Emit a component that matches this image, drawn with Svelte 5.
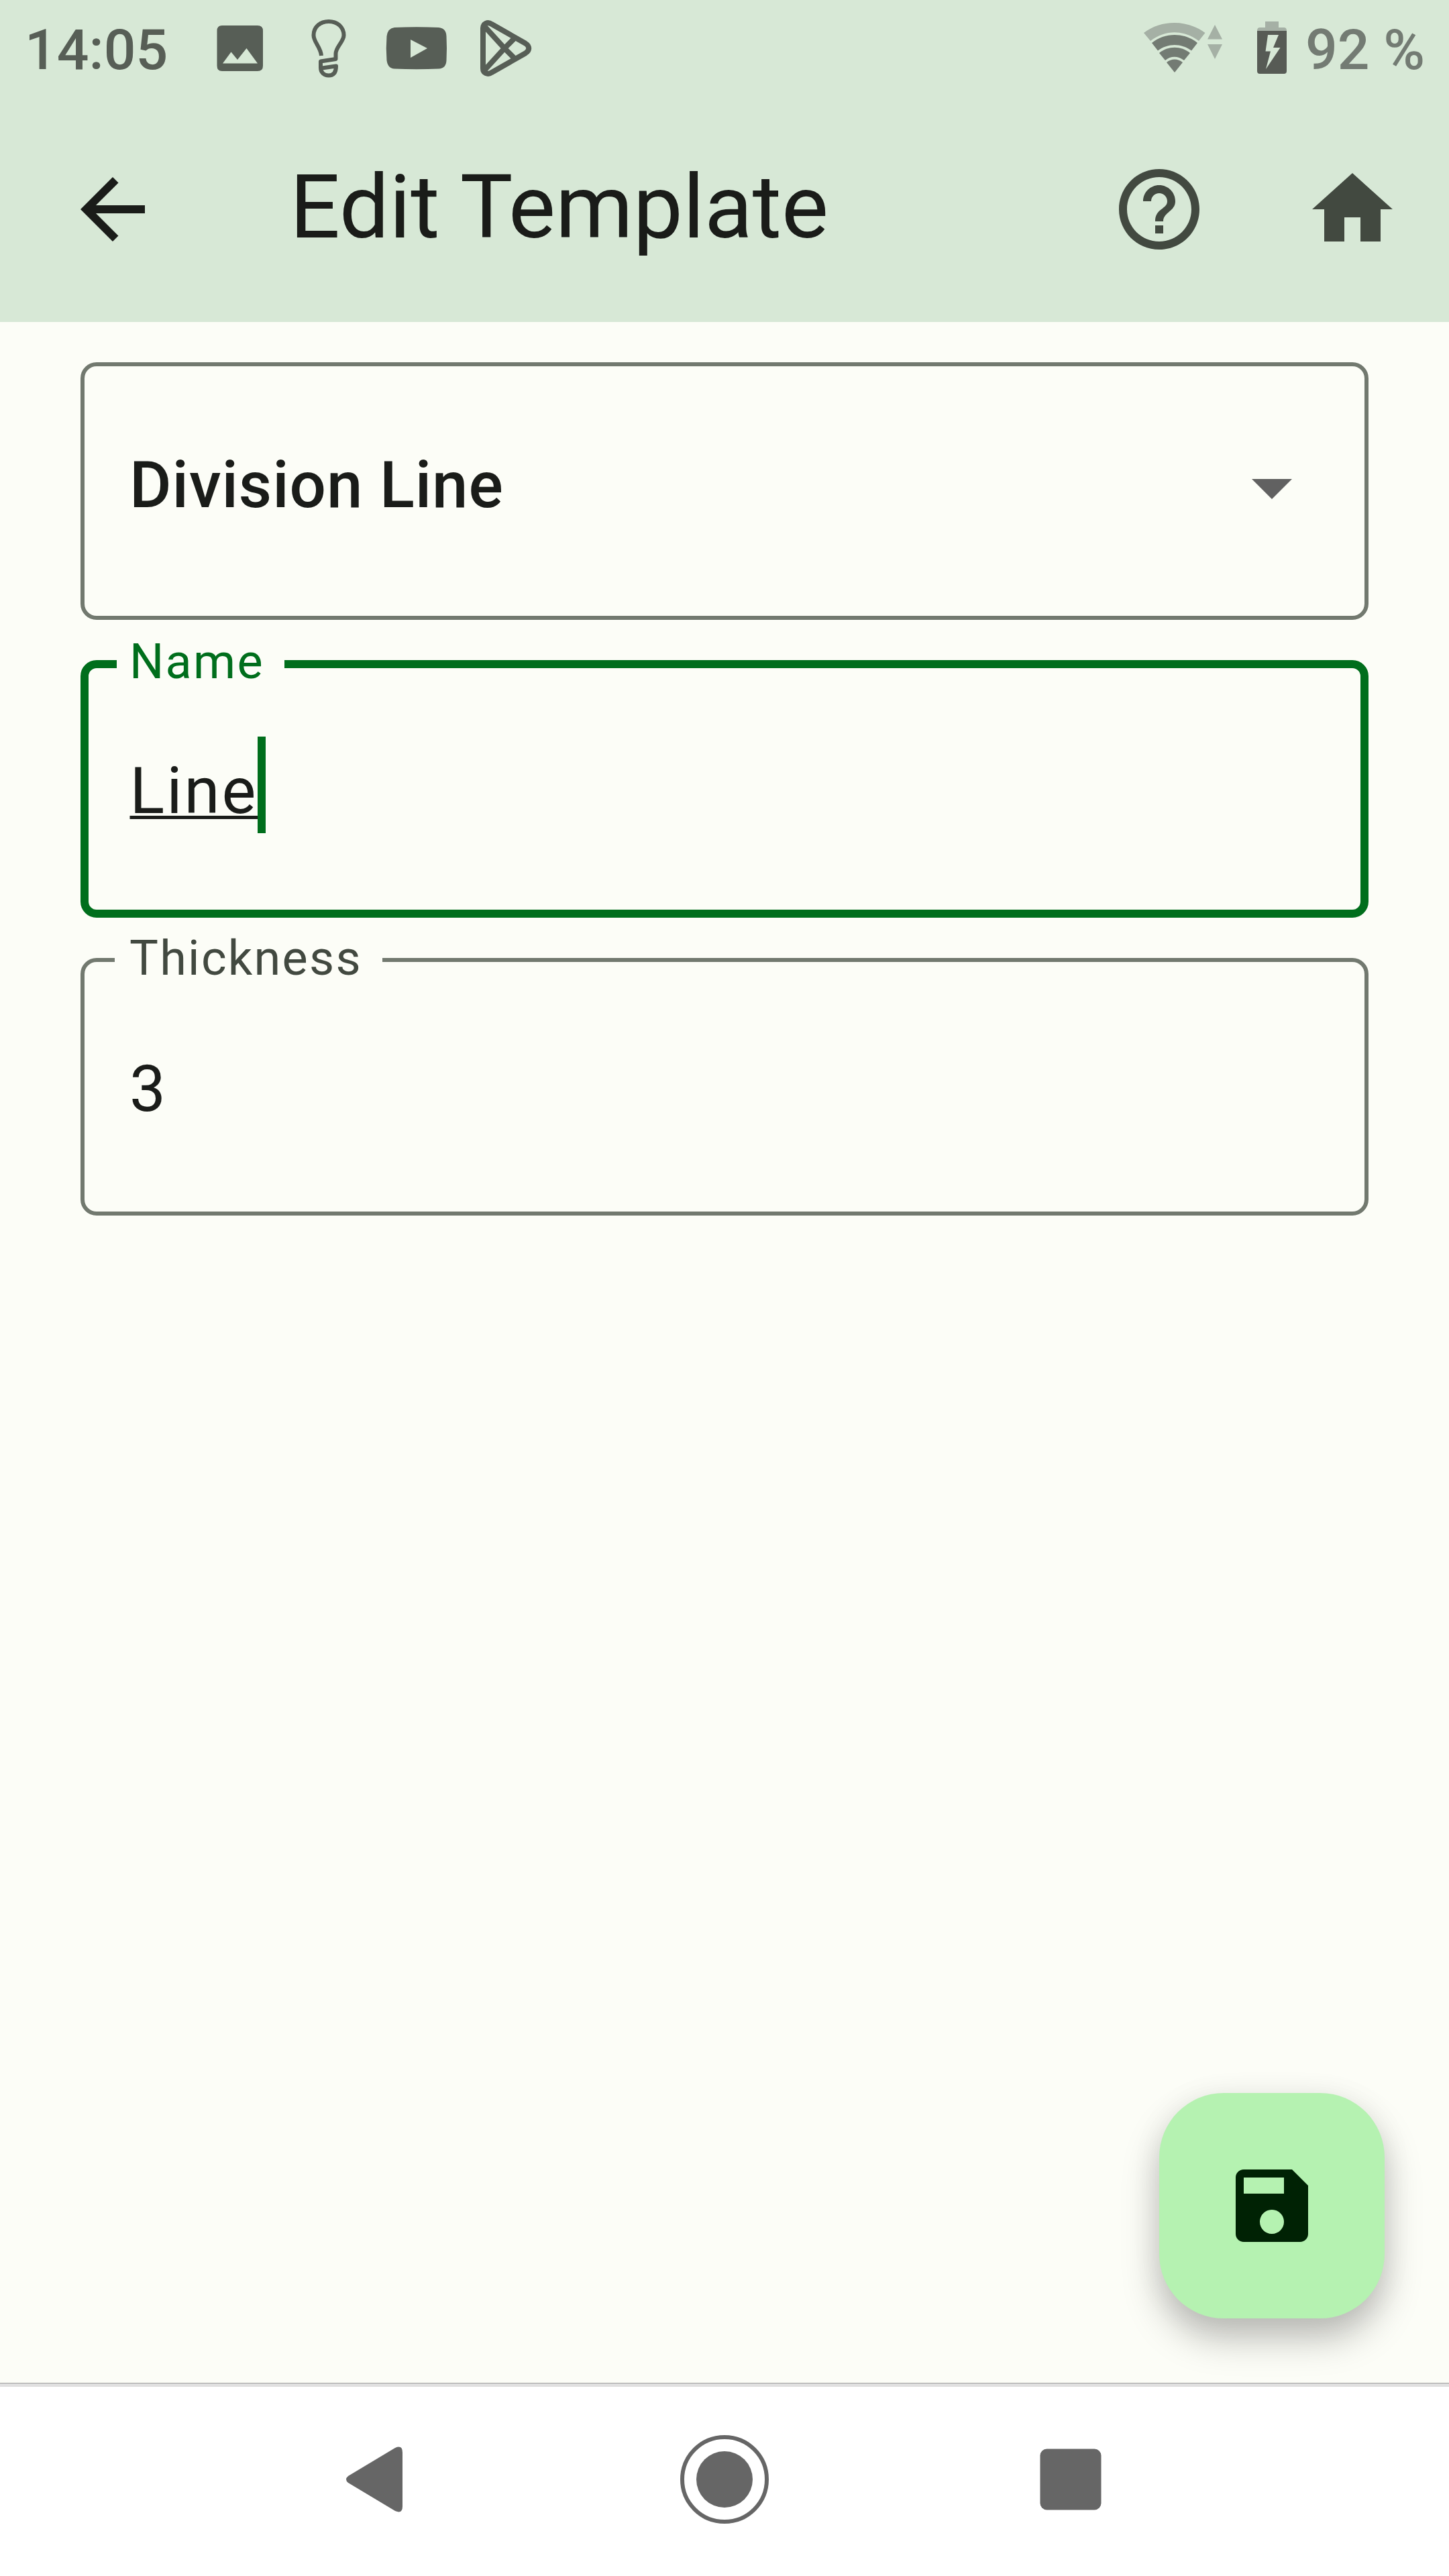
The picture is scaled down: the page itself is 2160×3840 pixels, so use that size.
<script>
  const title = 'Edit Template';
  const fields = { type: 'Division Line', name: 'Line', thickness: '3' };
</script>

<main class="screen">
  <header>
    <div class="status">
      <span class="clock">14:05</span>
      <svg class="notifications" viewBox="300 0 510 144">
        <path fill-rule="evenodd" d="M331 38H384Q392 38 392 46V98Q392 106 384 106H331Q323.500 106 323.500 98V46Q323.500 38 331 38ZM332 94.500H384L367.500 72L354 89L344.500 77.500Z" />
        <g class="outline thin">
          <path d="M479 83C478 70 467.500 63 467.500 52.500C467.500 40 477.500 32 490 32S512.500 40 512.500 52.500C512.500 62 500.500 70 500.500 80V88L478 91.500V101C478 108 483 112.500 490 112.500S501 108 501 98.500L480 101.500" />
        </g>
        <path fill-rule="evenodd" d="M588 41Q621 39.500 654 41Q665 42 665.500 54Q666.500 72 665.500 90Q665 102 654 102.500Q621 104 588 102.500Q578 102 576.500 90Q575 72 576.500 54Q578 42 588 41ZM612 59V86L637 72Z" />
        <g class="outline">
          <path d="M720 42C720 35 727 32 733 36L783 64.500C790 69 790 75 783 79.500L733 108C727 112 720 109 720 102ZM721 38L752 72L768 88M721 106L752 72L768 56" />
        </g>
      </svg>
      <svg class="system" viewBox="1690 0 240 144">
        <path class="faint" d="M1705 49C1731 29 1770 29 1796.500 49L1787 61C1765 44 1737 44 1715 61Z" />
        <path class="mid" d="M1717 64C1736 48 1766 48 1785 64L1776 75.500C1761 64 1741 64 1726 75.500ZM1728 79C1741 68 1761 68 1774 79L1765 90C1756 83 1745 83 1737 90ZM1739 93C1746 87 1756 87 1763 93L1751 108Z" />
        <path class="faint" d="M1800 58.500L1811 37L1822 58.500ZM1800 66H1822L1811 88Z" />
        <path class="faint" d="M1886 32H1906V41H1914Q1918 41 1918 46H1874Q1874 41 1878 41H1886Z" />
        <path class="solid" fill-rule="evenodd" d="M1874 46H1918V106Q1918 110 1914 110H1878Q1874 110 1874 106ZM1890 52L1886.500 76.500H1894L1887 103L1908.500 71H1898L1906 52Z" />
      </svg>
      <span class="percent">92 %</span>
    </div>
    <div class="appbar">
      <svg class="icon ink" viewBox="0 0 24 24"><path d="M20 11H7.830l5.590-5.590L12 4l-8 8 8 8 1.410-1.410L7.830 13H20v-2z" /></svg>
      <h1>{title}</h1>
      <svg class="icon" viewBox="0 0 24 24"><path d="M11 18h2v-2h-2v2zm1-16C6.480 2 2 6.480 2 12s4.480 10 10 10 10-4.480 10-10S17.520 2 12 2zm0 18c-4.410 0-8-3.590-8-8s3.590-8 8-8 8 3.590 8 8-3.590 8-8 8zm0-14c-2.210 0-4 1.790-4 4h2c0-1.100.9-2 2-2s2 .9 2 2c0 2-3 1.750-3 5h2c0-2.250 3-2.500 3-5 0-2.210-1.790-4-4-4z" /></svg>
      <svg class="icon" viewBox="0 0 24 24"><path d="M10 20v-6h4v6h5v-8h3L12 3 2 12h3v8z" /></svg>
    </div>
  </header>

  <section class="form">
    <div class="select">
      <span>{fields.type}</span>
      <svg viewBox="0 0 24 24"><path d="M7 10l5 5 5-5z" /></svg>
    </div>
    <fieldset class="focused">
      <legend><span>Name</span></legend>
      <div class="value"><span class="typed">{fields.name}</span><i class="caret"></i></div>
    </fieldset>
    <fieldset>
      <legend><span>Thickness</span></legend>
      <div class="value">{fields.thickness}</div>
    </fieldset>
    <button class="fab" aria-label="Save">
      <svg viewBox="0 0 24 24"><path d="M17 3H5c-1.110 0-2 .9-2 2v14c0 1.100.89 2 2 2h14c1.100 0 2-.9 2-2V7l-4-4zm-5 16c-1.660 0-3-1.340-3-3s1.340-3 3-3 3 1.340 3 3-1.340 3-3 3zm3-10H5V5h10v4z" /></svg>
    </button>
  </section>

  <nav>
    <svg viewBox="0 0 144 144"><path d="M27 67L97 25Q108 20 108 32V112Q108 124 97 119L27 77Q21 72 27 67Z" /></svg>
    <svg viewBox="0 0 144 144"><circle class="ring" cx="72" cy="72" r="63" /><circle cx="72" cy="72" r="42" /></svg>
    <svg viewBox="0 0 144 144"><rect x="26.500" y="26.500" width="91" height="91" rx="10" /></svg>
  </nav>
</main>

<style>
  :global(body) { margin: 0; }
  .screen {
    width: 2160px;
    height: 3840px;
    display: flex;
    flex-direction: column;
    overflow: hidden;
    background: #fcfdf7;
    color: #1a1c19;
    font-family: Roboto, sans-serif;
  }
  svg { display: block; flex: none; }
  header { height: 480px; background: #d7e8d6; }
  .status {
    height: 144px;
    display: flex;
    font-size: 84px;
    font-weight: 500;
    line-height: 150px;
    white-space: pre;
  }
  .clock { width: 263px; padding-left: 37px; color: #575e56; }
  .notifications { width: 510px; height: 144px; fill: #575e56; }
  .outline { fill: none; stroke: #575e56; stroke-width: 8; stroke-linejoin: round; }
  .thin { stroke-width: 6; }
  .system { width: 240px; height: 144px; margin-left: auto; }
  .faint { fill: #a5b0a5; }
  .mid { fill: #737b73; }
  .solid { fill: #575b55; }
  .percent { width: 214px; padding-left: 16px; color: #737b73; }
  .appbar {
    height: 336px;
    box-sizing: border-box;
    padding: 0 72px 0 96px;
    display: flex;
    align-items: center;
  }
  .icon { width: 144px; height: 144px; fill: #424940; }
  .icon + .icon { margin-left: 144px; }
  .ink { fill: #1a1c19; }
  h1 {
    flex: 1;
    margin: 0 0 6px 192px;
    font-size: 132px;
    font-weight: 400;
    line-height: 168px;
  }
  .form {
    flex: 1;
    padding: 60px 120px 96px;
    display: flex;
    flex-direction: column;
    gap: 60px;
  }
  .select {
    height: 384px;
    box-sizing: border-box;
    padding: 0 66px 12px 67px;
    display: flex;
    align-items: center;
    justify-content: space-between;
    border: 6px solid #72796f;
    border-radius: 24px;
    font-size: 96px;
    font-weight: 500;
    letter-spacing: 0.9px;
  }
  .select span { margin-bottom: 6px; }
  .select svg { width: 144px; height: 144px; fill: #616161; }
  fieldset {
    height: 384px;
    min-width: 0;
    box-sizing: border-box;
    margin: 0;
    padding: 0 45px;
    border: 6px solid #72796f;
    border-radius: 24px;
  }
  legend {
    width: 399px;
    height: 6px;
    box-sizing: border-box;
    padding: 0 0 0 22px;
    color: #424940;
    font-size: 72px;
    letter-spacing: 2.250px;
    white-space: nowrap;
  }
  legend span { display: block; line-height: 2px; }
  .value {
    padding: 117px 0 0 22px;
    display: flex;
    font-size: 96px;
    line-height: 144px;
    letter-spacing: 3px;
  }
  .focused { padding: 0 42px; border: 12px solid #006e1c; }
  .focused legend { width: 250px; height: 12px; padding-left: 19px; color: #006e1c; }
  .focused legend span { line-height: 6px; }
  .focused .value { padding: 102px 0 0 19.5px; }
  .typed {
    margin-top: 9px;
    text-decoration: underline;
    text-decoration-thickness: 5px;
    text-underline-offset: 4px;
    text-decoration-skip-ink: none;
  }
  .caret { width: 12px; height: 144px; background: #006e1c; }
  .fab {
    width: 336px;
    height: 336px;
    margin: auto -24px 0 auto;
    padding: 96px;
    border: 0;
    border-radius: 96px;
    background: #b5f2b1;
    box-shadow: 0 30px 54px rgba(0, 0, 0, 0.25), 0 4px 48px rgba(0, 0, 0, 0.06);
  }
  .fab svg { width: 144px; height: 144px; fill: #002204; }
  nav {
    height: 288px;
    box-sizing: border-box;
    padding: 0 306px;
    display: grid;
    grid-template-columns: repeat(3, 516px);
    place-items: center;
    background: #fff;
    box-shadow: inset 0 1px #9e9e9e, inset 0 6px #e0e0e0;
  }
  nav svg { width: 144px; height: 144px; fill: #666; }
  .ring { fill: none; stroke: #666; stroke-width: 6; }
</style>
